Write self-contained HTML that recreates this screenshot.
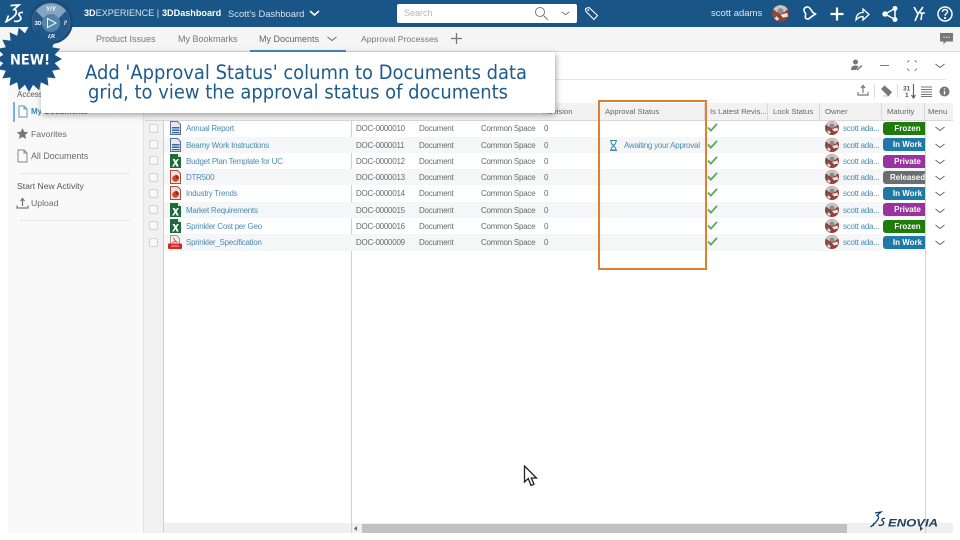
<!DOCTYPE html>
<html><head><meta charset="utf-8"><style>
*{box-sizing:border-box}
html,body{margin:0;padding:0;width:960px;height:540px;overflow:hidden;background:#fff}
body{position:relative;font-family:"Liberation Sans",sans-serif;font-size:8px;color:#666}
.a{position:absolute}
.t{position:absolute;white-space:nowrap}
.row{position:absolute;left:164px;width:761px;height:16.25px}
.row.s{background:#f5f6f8}
.row span,.row svg,.row b{position:absolute}
.row span{top:4px;line-height:10px;font-size:8px;letter-spacing:-.25px;white-space:nowrap;color:#6a6a6a}
.row span.l{color:#4a8cb2}
.cb{position:absolute;left:149px;width:9px;height:9px;border:1px solid #d2d2d2;border-radius:2px;background:#f8f8f8}
.row b{left:719px;top:1.500px;width:42px;height:13px;padding-left:7px;border-radius:3px 0 0 3px;color:#fff;font-size:8px;line-height:13px;text-align:center;white-space:nowrap}
.row svg.av{left:661px;top:1px}
.h{position:absolute;top:103px;height:17px;line-height:17px;font-size:7.700px;color:#666;padding-left:5px;border-right:1px solid #d8d8d8;white-space:nowrap}
.g{background:#1e7b0c}.b2{background:#1f78a6}.p{background:#9a339f}.y{background:#6c6d70}
</style></head><body>
<svg width="0" height="0" style="position:absolute"><defs>
<symbol id="w" viewBox="0 0 13 14"><path d="M1.500 .5h7l3 3v10h-10z" fill="#e4e9f1" stroke="#5a6f8e"/><path d="M3 6h7.500v1.500H3zM3 8.500h7.500V10H3zM3 11h7.500v1.300H3z" fill="#3a69a8"/></symbol>
<symbol id="x" viewBox="0 0 13 14"><path d="M1 0h8l3 3v11H1z" fill="#1d6b3a"/><path d="M9 0v3h3z" fill="#d7e8dc"/><path d="M3.500 5h2.200l1 2 1.500-2h1.800L7.700 8.200 9.800 12.500H7.600L6.500 10 4.800 12.500H2.900L5.600 8.800z" fill="#fff"/></symbol>
<symbol id="pp" viewBox="0 0 13 14"><path d="M1.500 .5h7l3 3v10h-10z" fill="#f5dfda" stroke="#a3503f"/><circle cx="6.500" cy="8.500" r="3.300" fill="#d6482c"/><path d="M6.500 8.500V4.800a3.700 3.700 0 0 1 3.700 3.700z" fill="#8e2d1b"/></symbol>
<symbol id="pdf" viewBox="0 0 14 14"><path d="M2.500 .5h6l3 3v6h-9z" fill="#f6eeee" stroke="#999"/><path d="M5.500 2.500c.5 2 1.500 4 4 5M4 7.500c1.500-.5 3-1 5-1" stroke="#d33" fill="none" stroke-width=".8"/><rect x="0" y="8.500" width="14" height="5.500" rx="1" fill="#d8281f"/><path d="M3 11h8" stroke="#f4b5b0" stroke-width="1"/></symbol>
<symbol id="chk" viewBox="0 0 12 10"><path d="M1 5l3.200 3.500L11 1" fill="none" stroke="#5cab57" stroke-width="2"/></symbol>
<symbol id="dn" viewBox="0 0 10 6"><path d="M.5 1l4.500 3.500L9.500 1" fill="none" stroke="#666" stroke-width="1"/></symbol>
<symbol id="avt" viewBox="0 0 14 14"><circle cx="7" cy="7" r="7" fill="#93403a"/><path d="M1 3.500A7 7 0 0 1 13 3.500L10 6H4z" fill="#c9c6c2"/><circle cx="7" cy="5" r="2.400" fill="#8f8a86"/><path d="M7 8l5.500-1.500.8 3-4.300 1zM3 8.500l3 3-2 1.500-2-2z" fill="#e8e4e0"/><path d="M1 6l2 1 .5 3.500L1 10z" fill="#6f5a55"/></symbol>
</defs></svg>

<!-- left panel -->
<div class="a" style="left:8px;top:52px;width:136px;height:481px;background:#f9f9f9;border-right:1px solid #e2e2e2"></div>
<div class="a" style="left:144px;top:100px;width:20px;height:433px;background:#f1f1f1;border-right:1px solid #cfcfcf"></div>
<div class="a" style="left:351px;top:120px;width:1px;height:413px;background:#d2d2d2"></div>

<div class="t" style="left:17px;top:90px;font-size:8px;color:#555">Access</div>
<div class="a" style="left:13px;top:102px;width:2px;height:20px;background:#7fb0cc"></div>
<svg class="a" style="left:18px;top:105px" width="10" height="13" viewBox="0 0 10 13"><path d="M1 1h5l3 3v8H1zM6 1v3h3" fill="#fff" stroke="#5c96b8"/></svg>
<div class="t" style="left:31px;top:107px;font-weight:bold;color:#3d85ad">My Documents</div>
<svg class="a" style="left:16px;top:127px" width="13" height="13" viewBox="0 0 13 13"><path d="M6.500 1l1.700 3.800 4.100.4-3.100 2.700.9 4.100-3.600-2.100-3.600 2.100.9-4.100L.7 5.200l4.100-.4z" fill="#777"/></svg>
<div class="t" style="left:31px;top:128.500px;font-size:8.700px;color:#6a6a6a">Favorites</div>
<svg class="a" style="left:17px;top:149px" width="11" height="14" viewBox="0 0 11 14"><path d="M1 1h6l3 3v9H1zM7 1v3h3" fill="#f9f9f9" stroke="#888"/></svg>
<div class="t" style="left:31px;top:151px;font-size:8.900px;color:#6a6a6a">All Documents</div>
<div class="a" style="left:20px;top:173px;width:110px;height:1px;background:#e6e6e6"></div>
<div class="t" style="left:17px;top:181px;font-size:8.600px;color:#555">Start New Activity</div>
<svg class="a" style="left:16px;top:197px" width="13" height="13" viewBox="0 0 13 13"><path d="M6.500 9V2M4.500 4l2-2.500 2 2.500M1 8.500V11h11V8.500" fill="none" stroke="#777" stroke-width="1.200"/></svg>
<div class="t" style="left:31px;top:198px;font-size:8.700px;color:#6a6a6a">Upload</div>
<div class="a" style="left:20px;top:220px;width:110px;height:1px;background:#e6e6e6"></div>

<!-- top bar -->
<div class="a" style="left:0;top:0;width:960px;height:27px;background:#195586"></div>
<div class="a" style="left:0;top:27px;width:960px;height:25px;background:#f5f5f5;border-bottom:1px solid #dcdcdc"></div>
<div class="t" style="left:84px;top:8px;font-size:9.100px;line-height:11px;color:#d5e3ee"><b style="color:#fff">3D</b>EXPERIENCE |</div>
<div class="t" style="left:162px;top:8px;font-size:9.100px;line-height:11px;font-weight:bold;color:#fff">3DDashboard</div>
<div class="t" style="left:228px;top:8px;font-size:9.400px;line-height:11px;color:#d5e3ee">Scott's Dashboard</div>
<svg class="a" style="left:309px;top:10px" width="11" height="7" viewBox="0 0 11 7"><path d="M1 1l4.500 4L10 1" fill="none" stroke="#fff" stroke-width="1.600"/></svg>
<div class="a" style="left:397px;top:4px;width:180px;height:19px;background:#fff;border-radius:2px"></div>
<div class="t" style="left:404px;top:8px;font-size:9px;line-height:11px;color:#b5b5b5">Search</div>
<svg class="a" style="left:534px;top:6px" width="15" height="15" viewBox="0 0 15 15"><circle cx="6" cy="6" r="4.500" fill="none" stroke="#777"/><path d="M9.500 9.500L14 14" stroke="#777"/></svg>
<svg class="a" style="left:561px;top:11px" width="9" height="5"><use href="#dn"/></svg>
<svg class="a" style="left:584px;top:6px" width="15" height="15" viewBox="0 0 15 15"><path d="M1.500 2.500L5 1.500l8.500 8-3.500 4-8-8z" fill="none" stroke="#fff" stroke-width="1.100"/><circle cx="4.300" cy="4.200" r=".9" fill="#fff"/></svg>
<div class="t" style="left:711px;top:8px;font-size:9.500px;line-height:11px;color:#dfe9f1">scott adams</div>
<svg class="a" style="left:772px;top:5px" width="17" height="17"><use href="#avt"/></svg>
<svg class="a" style="left:802px;top:5px" width="155" height="18" viewBox="0 0 155 18" fill="none" stroke="#fff">
<path d="M2 5c0-2 2-3.500 4-3 2 .5 3 3 4.500 5 .7 1 2 1.500 3 2-1 1-3 1.500-5 3.500-1.500 1.500-3 2-4.500 1C2 12 4.500 10 3.500 8.500 2.800 7.500 2 6.500 2 5z" stroke-width="1.600"/>
<path d="M35 2.500v13M28.500 9h13" stroke-width="2.200"/>
<path d="M54 15c0-5 3-7.500 7-7.500V4l6 5.500-6 5.500v-3.500c-3 0-5 1-7 3.500z" stroke-width="1.300"/>
<path d="M83 9l10-5.500M83 9l10 5.500M93 3.500v11" stroke-width="1.500"/><circle cx="83" cy="9" r="2.200" fill="#fff"/><circle cx="93" cy="3.500" r="2" fill="#fff"/><circle cx="93" cy="14.500" r="2" fill="#fff"/>
<path d="M112 2l4 7-3 7M121 2l-5 7M118 8h5M120 8l-1 7" stroke-width="1.600"/>
<circle cx="143" cy="9" r="7" stroke-width="1.500"/>
<path d="M140.500 7c0-1.500 1-2.500 2.500-2.500s2.500 1 2.500 2.200c0 2-2.500 2-2.500 4" stroke-width="1.400"/><circle cx="143" cy="13" r=".6" fill="#fff"/>
</svg>

<!-- tabs -->
<div class="t" style="left:96px;top:33px;font-size:9px;line-height:12px;color:#777">Product Issues</div>
<div class="t" style="left:178px;top:33px;font-size:9px;line-height:12px;color:#777">My Bookmarks</div>
<div class="t" style="left:259px;top:33px;font-size:9px;line-height:12px;color:#666">My Documents</div>
<svg class="a" style="left:327px;top:36px" width="10" height="6"><use href="#dn"/></svg>
<div class="a" style="left:250px;top:50px;width:96px;height:2px;background:#4a8bb5"></div>
<div class="t" style="left:361px;top:33px;font-size:8.700px;line-height:12px;color:#777">Approval Processes</div>
<svg class="a" style="left:451px;top:33px" width="11" height="11" viewBox="0 0 11 11"><path d="M5.500 0v11M0 5.500h11" stroke="#777" stroke-width="1.300"/></svg>
<svg class="a" style="left:940px;top:33px" width="13" height="12" viewBox="0 0 13 12"><path d="M0 0h13v8.500H6L3.500 11.500V8.500H0z" fill="#777"/><path d="M3.500 4.300h1.200M6 4.300h1.200M8.500 4.300h1.200" stroke="#fff"/></svg>

<!-- toolbar -->
<div class="a" style="left:555px;top:79px;width:391px;height:1px;background:#e6e6e6"></div>
<svg class="a" style="left:851px;top:59px" width="12" height="12" viewBox="0 0 12 12"><circle cx="4.500" cy="3" r="2.500" fill="#777"/><path d="M0 11c0-3.500 2-4.500 4.500-4.500 1.500 0 2.500.5 3 1L5 11z" fill="#777"/><path d="M6 11l5-4.500" stroke="#777" stroke-width="1.500"/></svg>
<div class="a" style="left:880px;top:65px;width:9px;height:1px;background:#777"></div>
<svg class="a" style="left:907px;top:60px" width="10" height="11" viewBox="0 0 10 11" fill="none" stroke="#888"><path d="M0 2.500L2.500 0M7.500 0L10 2.500M0 8.500L2.500 11M7.500 11L10 8.500"/></svg>
<svg class="a" style="left:935px;top:63px" width="10" height="6"><use href="#dn"/></svg>
<svg class="a" style="left:857px;top:84px" width="12" height="13" viewBox="0 0 12 13" fill="none" stroke="#777" stroke-width="1.200"><path d="M6 9V2M4 4l2-2.500L8 4M1 8v3h10V8"/></svg>
<div class="a" style="left:874px;top:84px;width:1px;height:14px;background:#ddd"></div>
<svg class="a" style="left:880px;top:85px" width="13" height="12" viewBox="0 0 13 12"><path d="M1 4L4.500.5 12 7l-3.500 4.500z" fill="#777"/><path d="M3 11h5" stroke="#bbb"/></svg>
<div class="a" style="left:897px;top:84px;width:1px;height:14px;background:#ddd"></div>
<svg class="a" style="left:903px;top:84px" width="14" height="15" viewBox="0 0 14 15"><text x="0" y="6.500" font-size="6.500" font-weight="bold" fill="#555" font-family="Liberation Sans,sans-serif">31</text><text x="2" y="13" font-size="6.500" font-weight="bold" fill="#555" font-family="Liberation Sans,sans-serif">1</text><path d="M10.500 0v13M8.500 11l2 3 2-3" stroke="#666" fill="none" stroke-width="1.200"/></svg>
<svg class="a" style="left:921px;top:86px" width="11" height="11" viewBox="0 0 11 11"><path d="M0 1h11M0 3.500h11M0 6h11M0 8.500h11M0 10.500h11" stroke="#777"/></svg>
<svg class="a" style="left:939px;top:86px" width="11" height="11" viewBox="0 0 11 11"><circle cx="5.500" cy="5.500" r="5" fill="#777"/><path d="M5.500 2.500v1.300M5.500 5v3.500" stroke="#fff" stroke-width="1.400"/></svg>

<!-- grid header -->
<div class="a" style="left:145px;top:103px;width:808px;height:18px;background:#f2f2f2;border-bottom:1px solid #d8d8d8"></div>
<div class="h" style="left:538px;width:62px">Revision</div>
<div class="h" style="left:600px;width:105px">Approval Status</div>
<div class="h" style="left:705px;width:63px">Is Latest Revis...</div>
<div class="h" style="left:768px;width:52px">Lock Status</div>
<div class="h" style="left:820px;width:62px">Owner</div>
<div class="h" style="left:882px;width:43px">Maturity</div>
<div class="h" style="left:925px;width:28px;border-right:0;padding-left:3px">Menu</div>

<!-- rows -->
<div class="row" style="top:120px"><svg style="left:5px;top:1px" width="13" height="14"><use href="#w"/></svg><span class="l" style="left:22px">Annual Report</span><span style="left:192px">DOC-0000010</span><span style="left:255px">Document</span><span style="left:317px">Common Space</span><span style="left:380px">0</span><svg style="left:543px;top:3px" width="11" height="9"><use href="#chk"/></svg><svg class="av" width="14" height="14"><use href="#avt"/></svg><span class="l" style="left:679px">scott ada...</span><b class="g">Frozen</b><svg style="left:771px;top:6px" width="10" height="6"><use href="#dn"/></svg></div>
<div class="row s" style="top:136.750px"><svg style="left:5px;top:1px" width="13" height="14"><use href="#w"/></svg><span class="l" style="left:22px">Beamy Work Instructions</span><span style="left:192px">DOC-0000011</span><span style="left:255px">Document</span><span style="left:317px">Common Space</span><span style="left:380px">0</span><svg style="left:444px;top:3px" width="11" height="11" viewBox="0 0 11 11"><path d="M2 .5h7M2 10.500h7M3 1c0 4 2 3.500 2.500 4.500C6 4.500 8 5 8 1M3 10c0-3 2-3 2.500-4.500C6 7 8 7 8 10z" fill="none" stroke="#3d85ad"/></svg><span class="l" style="left:460px">Awaiting your Approval</span><svg style="left:543px;top:3px" width="11" height="9"><use href="#chk"/></svg><svg class="av" width="14" height="14"><use href="#avt"/></svg><span class="l" style="left:679px">scott ada...</span><b class="b2">In Work</b><svg style="left:771px;top:6px" width="10" height="6"><use href="#dn"/></svg></div>
<div class="row" style="top:153px"><svg style="left:5px;top:1px" width="13" height="14"><use href="#x"/></svg><span class="l" style="left:22px">Budget Plan Template for UC</span><span style="left:192px">DOC-0000012</span><span style="left:255px">Document</span><span style="left:317px">Common Space</span><span style="left:380px">0</span><svg style="left:543px;top:3px" width="11" height="9"><use href="#chk"/></svg><svg class="av" width="14" height="14"><use href="#avt"/></svg><span class="l" style="left:679px">scott ada...</span><b class="p">Private</b><svg style="left:771px;top:6px" width="10" height="6"><use href="#dn"/></svg></div>
<div class="row s" style="top:169px"><svg style="left:5px;top:1px" width="13" height="14"><use href="#pp"/></svg><span class="l" style="left:22px">DTR500</span><span style="left:192px">DOC-0000013</span><span style="left:255px">Document</span><span style="left:317px">Common Space</span><span style="left:380px">0</span><svg style="left:543px;top:3px" width="11" height="9"><use href="#chk"/></svg><svg class="av" width="14" height="14"><use href="#avt"/></svg><span class="l" style="left:679px">scott ada...</span><b class="y">Released</b><svg style="left:771px;top:6px" width="10" height="6"><use href="#dn"/></svg></div>
<div class="row" style="top:185px"><svg style="left:5px;top:1px" width="13" height="14"><use href="#pp"/></svg><span class="l" style="left:22px">Industry Trends</span><span style="left:192px">DOC-0000014</span><span style="left:255px">Document</span><span style="left:317px">Common Space</span><span style="left:380px">0</span><svg style="left:543px;top:3px" width="11" height="9"><use href="#chk"/></svg><svg class="av" width="14" height="14"><use href="#avt"/></svg><span class="l" style="left:679px">scott ada...</span><b class="b2">In Work</b><svg style="left:771px;top:6px" width="10" height="6"><use href="#dn"/></svg></div>
<div class="row s" style="top:201.750px"><svg style="left:5px;top:1px" width="13" height="14"><use href="#x"/></svg><span class="l" style="left:22px">Market Requirements</span><span style="left:192px">DOC-0000015</span><span style="left:255px">Document</span><span style="left:317px">Common Space</span><span style="left:380px">0</span><svg style="left:543px;top:3px" width="11" height="9"><use href="#chk"/></svg><svg class="av" width="14" height="14"><use href="#avt"/></svg><span class="l" style="left:679px">scott ada...</span><b class="p">Private</b><svg style="left:771px;top:6px" width="10" height="6"><use href="#dn"/></svg></div>
<div class="row" style="top:218px"><svg style="left:5px;top:1px" width="13" height="14"><use href="#x"/></svg><span class="l" style="left:22px">Sprinkler Cost per Geo</span><span style="left:192px">DOC-0000016</span><span style="left:255px">Document</span><span style="left:317px">Common Space</span><span style="left:380px">0</span><svg style="left:543px;top:3px" width="11" height="9"><use href="#chk"/></svg><svg class="av" width="14" height="14"><use href="#avt"/></svg><span class="l" style="left:679px">scott ada...</span><b class="g">Frozen</b><svg style="left:771px;top:6px" width="10" height="6"><use href="#dn"/></svg></div>
<div class="row s" style="top:234.250px"><svg style="left:4px;top:1px" width="14" height="14"><use href="#pdf"/></svg><span class="l" style="left:22px">Sprinkler_Specification</span><span style="left:192px">DOC-0000009</span><span style="left:255px">Document</span><span style="left:317px">Common Space</span><span style="left:380px">0</span><svg style="left:543px;top:3px" width="11" height="9"><use href="#chk"/></svg><svg class="av" width="14" height="14"><use href="#avt"/></svg><span class="l" style="left:679px">scott ada...</span><b class="b2">In Work</b><svg style="left:771px;top:6px" width="10" height="6"><use href="#dn"/></svg></div>

<div class="cb" style="top:124px"></div><div class="cb" style="top:140px"></div><div class="cb" style="top:156px"></div><div class="cb" style="top:173px"></div><div class="cb" style="top:189px"></div><div class="cb" style="top:205px"></div><div class="cb" style="top:221px"></div><div class="cb" style="top:238px"></div>

<!-- orange box -->
<div class="a" style="left:598px;top:100px;width:109px;height:170px;border:2px solid #e07f2e"></div>

<!-- scrollbar -->
<div class="a" style="left:164px;top:523px;width:789px;height:10px;background:#f0f0f0"></div>
<div class="a" style="left:351px;top:523px;width:1px;height:10px;background:#d2d2d2"></div>
<div class="a" style="left:362px;top:524px;width:485px;height:9px;background:#c1c1c1"></div>
<div class="a" style="left:925px;top:120px;width:1px;height:413px;background:#d2d2d2"></div>
<svg class="a" style="left:354px;top:526px" width="4" height="5"><path d="M3 0v5L0 2.500z" fill="#666"/></svg>
<svg class="a" style="left:920px;top:526px" width="4" height="5"><path d="M0 0v5l3-2.500z" fill="#444"/></svg>

<!-- cursor -->
<svg class="a" style="left:523px;top:465px" width="16" height="23" viewBox="0 0 16 23"><path d="M1.500 1v16l3.800-3.500L8 20.500l3-1.300-2.700-6.200h5.200z" fill="#fff" stroke="#222" stroke-width="1.300"/></svg>

<!-- enovia -->
<svg class="a" style="left:868px;top:510px" width="72" height="20" viewBox="0 0 72 20" fill="none"><path d="M7 3l6-1-4 3.500c2 .5 2 2.500.5 4.500C7.500 13 4.500 15.500 2.500 17M6 13l-1 3M17 8.500c-3-.5-4 1.500-2.500 2.500 1.700 1.200 1.700 3-.5 4-1 .5-2.500.5-3.500 0" stroke="#123e66" stroke-width="1.300"/><text x="20" y="16.500" font-family="Liberation Sans,sans-serif" font-size="11" font-weight="bold" font-style="italic" fill="#1b3f63" textLength="50" lengthAdjust="spacingAndGlyphs">ENOVIA</text></svg>

<!-- compass -->
<svg class="a" style="left:28px;top:0" width="48" height="46" viewBox="0 0 48 46">
<circle cx="23" cy="22" r="22" fill="#1b4a76"/>
<circle cx="23" cy="22" r="19" fill="#23598a" stroke="#3d6f9b" stroke-width=".7"/>
<path d="M8 11a18.500 18.500 0 0 1 30 0L30 19a9 9 0 0 0-14 0z" fill="#85a6c2"/>
<circle cx="23" cy="23" r="9" fill="#5483aa"/>
<path d="M19.500 18.500l8.500 4.500-8.500 4.500z" fill="none" stroke="#eef4f9" stroke-width="1"/>
<text x="23" y="11" text-anchor="middle" font-size="6" font-weight="bold" font-style="italic" font-family="Liberation Sans,sans-serif" fill="#fff">Y/Y</text>
<text x="6.500" y="25" font-size="5.500" font-weight="bold" font-family="Liberation Sans,sans-serif" fill="#fff">3D</text>
<text x="36" y="25" font-size="6" font-weight="bold" font-family="Liberation Sans,sans-serif" fill="#fff">i<tspan font-size="4" dy="-2">f</tspan></text>
<text x="23" y="38" text-anchor="middle" font-size="5" font-weight="bold" font-family="Liberation Sans,sans-serif" fill="#fff">V,R</text>
</svg>
<svg class="a" style="left:0;top:0" width="27" height="27" viewBox="0 0 27 27" fill="none" stroke="#fff" stroke-width="1.700"><path d="M10.500 5.500L19 5l-5 4.500c3 .3 3 3.500 1 5.800-2.700 3-6.500 5.200-10 7M6 22l2.500-6.500"/><path d="M23 12.500c-3.500-.5-5 1.500-3.600 3 1.800 1.600 2.300 3.900-.4 5.300-1.500.7-3.500.8-5 .2"/></svg>

<!-- popup -->
<div class="a" style="left:41px;top:52px;width:514px;height:61px;background:#fff;box-shadow:1px 2px 6px rgba(0,0,0,.35)"></div>
<svg class="a" style="left:41px;top:52px" width="514" height="61"><text x="44" y="27" font-family="'DejaVu Sans',sans-serif" font-size="19.500" fill="#1d5c8c" textLength="442" lengthAdjust="spacingAndGlyphs">Add 'Approval Status' column to Documents data</text><text x="47" y="46.500" font-family="'DejaVu Sans',sans-serif" font-size="19.500" fill="#1d5c8c" textLength="420" lengthAdjust="spacingAndGlyphs">grid, to view the approval status of documents</text></svg>

<!-- NEW badge -->
<svg class="a" style="left:-5px;top:25px" width="68" height="68" viewBox="-34 -34 68 68"><polygon fill="#1a5486" points="33,0 25.700,4.100 31.400,10.200 23.200,11.800 26.700,19.400 18.400,18.400 19.400,26.700 11.800,23.200 10.200,31.400 4.100,25.700 0,33 -4.100,25.700 -10.200,31.400 -11.800,23.200 -19.400,26.700 -18.400,18.400 -26.700,19.400 -23.200,11.800 -31.400,10.200 -25.700,4.100 -33,0 -25.700,-4.100 -31.400,-10.200 -23.200,-11.800 -26.700,-19.400 -18.400,-18.400 -19.400,-26.700 -11.800,-23.200 -10.200,-31.400 -4.100,-25.700 0,-33 4.100,-25.700 10.200,-31.400 11.800,-23.200 19.400,-26.700 18.400,-18.400 26.700,-19.400 23.200,-11.800 31.400,-10.200 25.700,-4.100"/><text x="1" y="5.500" text-anchor="middle" font-family="'DejaVu Sans',sans-serif" font-weight="bold" font-size="14" fill="#fff" textLength="40" lengthAdjust="spacingAndGlyphs">NEW!</text></svg>
</body></html>
